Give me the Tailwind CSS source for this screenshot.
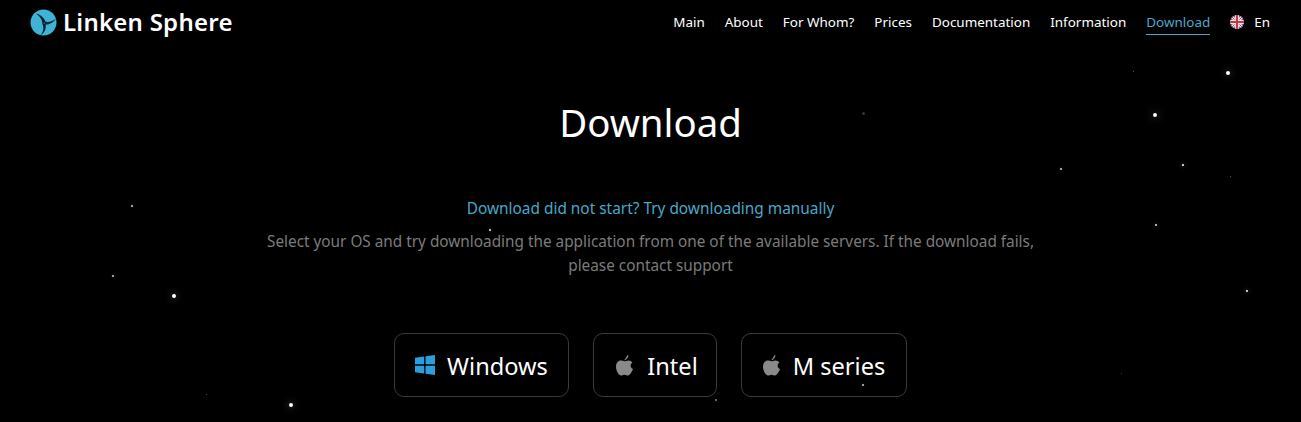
<!DOCTYPE html>
<html lang="en">
<head>
  <meta charset="UTF-8" />
  <meta name="viewport" content="width=device-width, initial-scale=1" />
  <title>Linken Sphere - Download</title>
  <script src="https://cdn.jsdelivr.net/npm/@tailwindcss/browser@4"></script>
</head>
<body class="relative h-[422px] overflow-hidden bg-black font-['Noto_Sans',sans-serif] text-white">

  <!-- Star field -->
  <div id="stars" class="absolute inset-0"></div>

  <div class="relative">
    <!-- Header -->
    <header class="flex h-[44px] items-center justify-between pl-[30px] pr-[31px]">
      <a class="flex items-center gap-[6px]">
        <svg class="h-[27px] w-[27px]" viewBox="0 0 27 27">
          <circle cx="13.5" cy="13.5" r="13" fill="#3fb3d6" />
          <path d="M6 4.500 C10.500 5.500 14 8.500 15.500 12.500 L12.500 15.500 C12.500 11 10 7.500 6 4.500 Z" fill="#06222c" />
          <path d="M26 9.500 C23.500 13.500 19 16 14.500 15.500 L14.500 12.500 C18.500 13.500 22.500 12.500 26 9.500 Z" fill="#06222c" />
          <path d="M10.500 26 C14.500 24 16.500 20 15.500 15 L12.500 14.500 C14 19 13.500 23 10.500 26 Z" fill="#06222c" />
        </svg>
        <span class="text-[24px] font-semibold tracking-[0.25px]">Linken Sphere</span>
      </a>
      <nav class="flex items-center gap-[20px] text-[13.45px]">
        <a>Main</a>
        <a>About</a>
        <a>For Whom?</a>
        <a>Prices</a>
        <a>Documentation</a>
        <a>Information</a>
        <a class="border-b border-[#4aa8c9] pb-[2px] pt-[3px] text-[#4aa8c9]">Download</a>
        <a class="flex items-center gap-[10px]">
          <svg class="h-[14px] w-[14px]" viewBox="0 0 14 14">
            <clipPath id="flag"><circle cx="7" cy="7" r="7" /></clipPath>
            <g clip-path="url(#flag)">
              <rect width="14" height="14" fill="#3c3b6e" />
              <path d="M0 0 L14 14 M14 0 L0 14" stroke="#e8e8e8" stroke-width="3" />
              <path d="M0 0 L14 14 M14 0 L0 14" stroke="#c8344a" stroke-width="1" />
              <path d="M7 0 V14 M0 7 H14" stroke="#e8e8e8" stroke-width="4.500" />
              <path d="M7 0 V14 M0 7 H14" stroke="#c8344a" stroke-width="2.200" />
            </g>
          </svg>
          En
        </a>
      </nav>
    </header>

    <!-- Main -->
    <main class="flex flex-col items-center">
      <h1 class="mt-[52px] text-[38.4px] leading-[52px]">Download</h1>
      <a class="mt-[50px] text-[15.4px] leading-[22px] text-[#4aa8c9]">Download did not start? Try downloading manually</a>
      <p class="mt-[9px] w-[800px] text-center text-[15.33px] leading-[24px] text-[#7b7b7b]">Select your OS and try downloading the application from one of the available servers. If the download fails, please contact support</p>

      <div class="mt-[56px] flex gap-[24px]">
        <button class="flex h-[64px] w-[175px] items-center justify-center gap-[12px] rounded-[10px] border border-[#3a3a3a] text-[23.6px]">
          <svg class="h-[20px] w-[20px]" viewBox="0 0 19 19" fill="#2a9fdc">
            <path d="M0 2.700 L8.700 1.500 V8.900 H0 Z" />
            <path d="M10 1.300 L19 0 V8.900 H10 Z" />
            <path d="M0 10.100 H8.700 V17.500 L0 16.300 Z" />
            <path d="M10 10.100 H19 V19 L10 17.700 Z" />
          </svg>
          <span class="pt-[3px]">Windows</span>
        </button>
        <button class="flex h-[64px] w-[124px] items-center justify-center gap-[14px] rounded-[10px] border border-[#3a3a3a] pl-[4px] text-[23.6px]">
          <svg class="h-[21px] w-[17px]" viewBox="0 0 17 21" fill="#8a8a8a">
            <path d="M11.500 0 L12.500 0.500 C12 2.500 11 4.200 9 5.300 L8.300 5 C9.500 3.500 10.500 2 11.500 0 Z" />
            <path d="M8.500 6.300 C9.600 6.300 10.700 5.400 12.500 5.400 C14 5.400 15.500 6.200 16.400 7.500 C13.800 9 14.200 13 17 14.100 C16 16.600 14 20.500 12 20.500 C10.700 20.500 10.200 19.700 8.500 19.700 C6.800 19.700 6.200 20.500 5 20.500 C3 20.500 0 16.200 0 11.700 C0 7.900 2.300 5.600 4.800 5.600 C6.300 5.600 7.500 6.300 8.500 6.300 Z" />
          </svg>
          <span class="pt-[3px]">Intel</span>
        </button>
        <button class="flex h-[64px] w-[166px] items-center justify-center gap-[13px] rounded-[10px] border border-[#3a3a3a] text-[23.6px]">
          <svg class="h-[21px] w-[17px]" viewBox="0 0 17 21" fill="#8a8a8a">
            <path d="M11.500 0 L12.500 0.500 C12 2.500 11 4.200 9 5.300 L8.300 5 C9.500 3.500 10.500 2 11.500 0 Z" />
            <path d="M8.500 6.300 C9.600 6.300 10.700 5.400 12.500 5.400 C14 5.400 15.500 6.200 16.400 7.500 C13.800 9 14.200 13 17 14.100 C16 16.600 14 20.500 12 20.500 C10.700 20.500 10.200 19.700 8.500 19.700 C6.800 19.700 6.200 20.500 5 20.500 C3 20.500 0 16.200 0 11.700 C0 7.900 2.300 5.600 4.800 5.600 C6.300 5.600 7.500 6.300 8.500 6.300 Z" />
          </svg>
          <span class="pt-[3px]">M series</span>
        </button>
      </div>
    </main>
  </div>

  <script>
    // x, y, size, brightness
    const stars = [
      [1228, 73, 3.5, 1], [1155, 115, 4, 1], [1133, 71, 1, 0.4], [863, 113, 3, 0.2],
      [1183, 165, 2, 1], [1061, 169, 1.500, 0.8], [1230, 176, 1, 0.4], [1156, 225, 2, 0.9],
      [1247, 291, 2, 1], [1121, 373, 1, 0.3], [132, 206, 1.500, 0.8], [113, 276, 1.500, 0.8],
      [174, 296, 3.500, 1], [206, 394, 1, 0.4], [291, 405, 3.500, 1], [490, 230, 1.500, 0.9],
      [716, 400, 1.500, 0.5], [863, 385, 1.500, 0.8]
    ];
    document.getElementById('stars').innerHTML = stars.map(([x, y, size, alpha]) =>
      `<span class="absolute rounded-full bg-white" style="left:${x - size / 2}px;top:${y - size / 2}px;width:${size}px;height:${size}px;opacity:${alpha};box-shadow:0 0 ${size * 2}px rgba(255,255,255,${alpha / 2})"></span>`
    ).join('');
  </script>
</body>
</html>
